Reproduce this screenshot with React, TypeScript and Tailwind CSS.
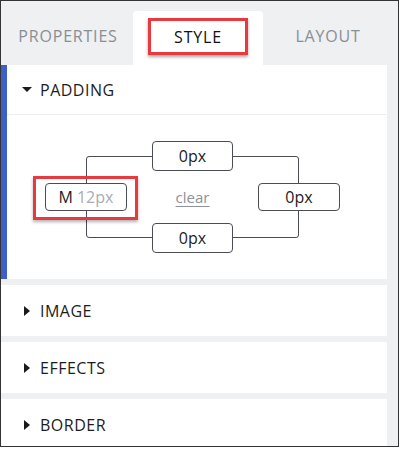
import React from "react";

const font = { fontFamily: '"Open Sans", "Liberation Sans", sans-serif' };

function Collapsed({ label }: { label: string }) {
  return (
    <div className="h-[51px] bg-white flex items-center pl-[23px]">
      <span className="w-0 h-0 border-y-[5px] border-y-transparent border-l-[6px] border-l-[#1a1a1a]" />
      <span className="ml-[10px] text-[16px] text-[#1c1c1c] tracking-[0.5px]">{label}</span>
    </div>
  );
}

function ValueBox({ children }: { children: React.ReactNode }) {
  return (
    <div className="h-full w-full bg-white border border-[#4a4d55] rounded-[4px] flex items-center justify-center text-[16px] text-[#222]">
      {children}
    </div>
  );
}

export default function App() {
  return (
    <div
      style={font}
      className="w-[399px] h-[447px] border border-[#333] bg-[#eef0f2] overflow-hidden flex flex-col"
    >
      {/* tabs */}
      <div className="h-[64px] flex pl-[2px] shrink-0">
        <div className="w-[130px] flex items-center justify-center pt-[6px] text-[16px] text-[#8a8e95] tracking-[0.8px]">
          PROPERTIES
        </div>
        <div className="w-[130px] mt-[10px] bg-white rounded-t-[4px] flex justify-center pt-[7px]">
          <span className="w-[100px] h-[37px] border-[3px] border-[#e8393e] shadow-[0_2px_3px_rgba(0,0,0,0.35)] flex items-center justify-center text-[16px] text-[#111] tracking-[0.8px]">
            STYLE
          </span>
        </div>
        <div className="w-[130px] flex items-center justify-center pt-[6px] text-[16px] text-[#8a8e95] tracking-[0.8px]">
          LAYOUT
        </div>
      </div>

      {/* sections */}
      <div className="flex flex-col gap-[6px] pr-[11px]">
        <div className="flex">
          <div className="w-[6px] bg-[#3c5fc9]" />
          <div className="flex-1 bg-white">
            <div className="h-[50px] border-b border-[#eceef1] flex items-center pl-[15px]">
              <span className="w-0 h-0 border-x-[5px] border-x-transparent border-t-[5px] border-t-[#1a1a1a]" />
              <span className="ml-[8px] text-[16px] text-[#1c1c1c] tracking-[0.5px]">PADDING</span>
            </div>
            <div className="h-[164px] flex items-center pl-[38px]">
              <div className="relative w-[295px] grid grid-cols-[82px_131px_82px] grid-rows-[30px_28px_30px] gap-y-[12px]">
                <div className="absolute left-[41px] top-[15px] w-[213px] h-[82px] border border-[#4a4d55] rounded-[3px]" />
                <div className="col-start-2 row-start-1 relative px-[25px]">
                  <ValueBox>0px</ValueBox>
                </div>
                <div className="col-start-1 row-start-2 relative">
                  <ValueBox>
                    <span className="text-[#222]">M</span>
                    <span className="ml-[4px] text-[#a8acb6]">12px</span>
                  </ValueBox>
                  <span className="absolute -left-[12px] -top-[7px] w-[105px] h-[44px] border-[3px] border-[#e8393e] shadow-[0_2px_3px_rgba(0,0,0,0.3)]" />
                </div>
                <div className="col-start-2 row-start-2 relative flex items-center justify-center">
                  <span className="text-[15px] text-[#8d919a] underline underline-offset-[3px]">clear</span>
                </div>
                <div className="col-start-3 row-start-2 relative">
                  <ValueBox>0px</ValueBox>
                </div>
                <div className="col-start-2 row-start-3 relative px-[25px]">
                  <ValueBox>0px</ValueBox>
                </div>
              </div>
            </div>
          </div>
        </div>
        <Collapsed label="IMAGE" />
        <Collapsed label="EFFECTS" />
        <Collapsed label="BORDER" />
      </div>
    </div>
  );
}
